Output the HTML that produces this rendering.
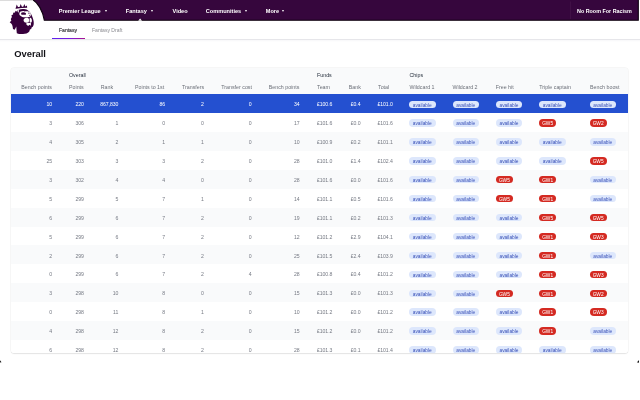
<!DOCTYPE html>
<html><head><meta charset="utf-8"><title>Overall</title>
<style>
*{box-sizing:border-box;margin:0;padding:0}
html,body{width:640px;height:400px;background:#fff;overflow:hidden}
body{position:relative;font-family:"Liberation Sans",sans-serif;}
.abs{position:absolute;white-space:nowrap}
#shot{will-change:transform;filter:blur(0.3px);position:absolute;left:0;top:0;width:640px;height:400px;background:#fff;overflow:hidden}
#nav{position:absolute;left:0;top:0;width:640px;height:22px;}
.nt{position:absolute;color:#fff;font-weight:bold;font-size:5.6px;line-height:8px;top:7px;white-space:nowrap}
.arr{position:absolute;width:0;height:0;border-left:1.9px solid transparent;border-right:1.9px solid transparent;border-top:2.5px solid #fff;top:9.8px}
.st{position:absolute;font-size:5.05px;line-height:8px;top:26.2px;white-space:nowrap}
#tw{position:absolute;left:11.0px;top:68.0px;width:617.4px;height:285.0px;border-radius:3px;overflow:hidden;background:#fff;box-shadow:0 0 0 0.5px rgba(0,0,0,0.05),0 0.5px 1.2px rgba(0,0,0,0.09)}
.row{position:absolute;left:0;width:100%;}
.h{position:absolute;white-space:nowrap;font-size:5.3px;line-height:8px;color:#6b6f78}
.g{position:absolute;white-space:nowrap;font-size:5.3px;line-height:8px;color:#1f2937}
.v{position:absolute;white-space:nowrap;font-size:5.15px;line-height:8px;color:#767a84;letter-spacing:-0.07px}
.w{color:#fff}
.p{position:absolute;height:7.3px;border-radius:4px;font-size:4.8px;line-height:9.3px;text-align:center;white-space:nowrap}
.pa{width:26.5px;background:#dde7fc;color:#3a52b8}
.pg{width:17.2px;background:#d42a22;color:#fff}
</style></head><body>
<div id="shot">

<svg id="nav" viewBox="0 0 640 22"><path d="M31.6,-1 C38,2.3 42.8,11 44.3,20.2 L638.3,20.2 L638.3,-1 Z" fill="#36063d" stroke="#0c000e" stroke-width="1.1"/><rect x="570.3" y="1.5" width="0.5" height="17.5" fill="#4b1a50"/><path d="M138.2,20.7 L140.1,18.4 L142,20.7 Z" fill="#fff"/></svg>
<span class="nt" style="left:58.75px">Premier League</span>
<span class="arr" style="left:104.6px"></span>
<span class="nt" style="left:125.75px">Fantasy</span>
<span class="arr" style="left:151.1px"></span>
<span class="nt" style="left:172.5px">Video</span>
<span class="nt" style="left:205.75px">Communities</span>
<span class="arr" style="left:244.7px"></span>
<span class="nt" style="left:265.75px">More</span>
<span class="arr" style="left:281.90000000000003px"></span>
<span class="nt" style="left:577px;font-size:5.4px">No Room For Racism</span>
<svg class="abs" style="left:0;top:0" width="48" height="40" viewBox="0 0 48 40">
<g fill="#37003c">
<path d="M15.4,8.4 L16.0,7.2 L16.7,4.6 L18.0,7.0 L19.6,6.9 L20.7,4.1 L21.9,6.8 L23.2,6.7 L24.4,4.1 L25.3,6.6 L26.9,5.4 L27.2,7.8 L21.5,8.0 L16.0,8.8 Z"/>
<path d="M18.9,9.7 C21.5,8.8 25.2,8.9 27.7,10.2 C30,11.6 31.6,14.5 32.6,17.5 C33.6,20.2 34.1,23 33.6,25 L32.8,26.8 L31.6,27.6 L31.2,29 L29.9,29.6 L29.3,31.4 L28.2,32.6 L26.5,33.5 L23,34.1 L19,34.1 L16.8,33.2 L16.5,30 L16.3,26.4 L14.7,29.8 L13.0,28.9 L12.6,26.6 L12.1,24.8 L11.2,23.4 L9.7,22.2 L11.3,20.8 L10.8,19 L11.9,16.9 L11.4,15.2 L13.1,14.5 L13.1,12.8 L15.0,12.6 L15.5,10.7 L17.3,11.8 L17.5,10.3 Z"/>
</g>
<g fill="#fff">
<path d="M17.5,10.5 L19.0,9.9 L18.6,12.9 Z"/>
<path d="M19.3,13.4 C19.5,11.7 21.5,10.9 23.5,11.0 L24.6,11.5 C26.2,10.9 28.8,11.1 29.9,12.3 C30.9,13.4 31.2,15.2 30.4,16.3 C29.3,17.5 26.5,17.5 24.3,17.2 C21.7,16.9 19.1,15.5 19.3,13.4 Z"/>
<path d="M23.7,19.6 C24.3,17.9 26.6,17.5 28.1,18.0 C29.3,18.6 29.4,20.5 28.8,21.7 C28.0,22.9 25.8,23.0 24.6,22.3 C23.7,21.6 23.4,20.6 23.7,19.6 Z"/>
<path d="M29.7,17.8 C30.9,17.3 31.8,18.7 31.9,20.2 C32.0,21.6 31.5,22.8 30.6,22.7 C29.7,22.6 29.5,21.4 29.6,20.2 Z"/>
<path d="M25.9,23.8 L27.7,22.8 L30.9,23.1 L30.9,25.7 L29.4,24.7 L28.2,26 L26.9,25.1 Z"/>
</g>
<g fill="#37003c">
<path d="M21.1,13.0 C22,11.9 24.8,12.0 26.0,13.2 L25.6,15.0 C24,14.6 22.8,15.0 21.4,14.7 Z"/>
<circle cx="28.9" cy="13.2" r="0.6"/>
<circle cx="29.5" cy="15.3" r="0.5"/>
</g>
</svg>

<div class="abs" style="left:0;top:0;width:33px;height:0.7px;background:#dcdcdc"></div>
<div class="abs" style="left:0;top:39.3px;width:640px;height:0.7px;background:#e6e6ea"></div>
<div class="abs" style="left:0;top:40px;width:640px;height:2px;background:linear-gradient(#f7f7f9,#fff)"></div>
<span class="st" style="left:59px;color:#2a2a2f;-webkit-text-stroke:0.12px #2a2a2f">Fantasy</span>
<span class="st" style="left:92px;color:#8a8a90">Fantasy Draft</span>
<div class="abs" style="left:52px;top:37.7px;width:32.5px;height:1.6px;background:linear-gradient(90deg,#5e22f0,#7a18dc 55%,#a8128e)"></div>
<div class="abs" style="left:14.2px;top:48.1px;font-size:9.4px;line-height:12px;font-weight:bold;color:#121217">Overall</div>
<div id="tw">
<div class="row" style="top:0;height:26.200000000000003px;background:#f9fafb"></div>
<div class="row" style="top:26.20px;height:18.95px;background:#2450d0"></div>
<div class="row" style="top:45.10px;height:18.95px;background:#fff"></div>
<div class="row" style="top:64.00px;height:18.95px;background:#f9fafb"></div>
<div class="row" style="top:82.90px;height:18.95px;background:#fff"></div>
<div class="row" style="top:101.80px;height:18.95px;background:#f9fafb"></div>
<div class="row" style="top:120.70px;height:18.95px;background:#fff"></div>
<div class="row" style="top:139.60px;height:18.95px;background:#f9fafb"></div>
<div class="row" style="top:158.50px;height:18.95px;background:#fff"></div>
<div class="row" style="top:177.40px;height:18.95px;background:#f9fafb"></div>
<div class="row" style="top:196.30px;height:18.95px;background:#fff"></div>
<div class="row" style="top:215.20px;height:18.95px;background:#f9fafb"></div>
<div class="row" style="top:234.10px;height:18.95px;background:#fff"></div>
<div class="row" style="top:253.00px;height:18.95px;background:#f9fafb"></div>
<div class="row" style="top:271.90px;height:18.95px;background:#fff"></div>
<span class="g" style="left:58.0px;top:2.50px">Overall</span>
<span class="g" style="left:306.0px;top:2.50px">Funds</span>
<span class="g" style="left:398.5px;top:2.50px">Chips</span>
<span class="h" style="left:10.25px;top:15.20px">Bench points</span>
<span class="h" style="left:58.0px;top:15.20px">Points</span>
<span class="h" style="left:89.75px;top:15.20px">Rank</span>
<span class="h" style="left:124.0px;top:15.20px">Points to 1st</span>
<span class="h" style="left:171.0px;top:15.20px">Transfers</span>
<span class="h" style="left:210.25px;top:15.20px">Transfer cost</span>
<span class="h" style="left:257.75px;top:15.20px">Bench points</span>
<span class="h" style="left:306.0px;top:15.20px">Team</span>
<span class="h" style="left:337.75px;top:15.20px">Bank</span>
<span class="h" style="left:367.0px;top:15.20px">Total</span>
<span class="h" style="left:398.5px;top:15.20px">Wildcard 1</span>
<span class="h" style="left:441.5px;top:15.20px">Wildcard 2</span>
<span class="h" style="left:484.75px;top:15.20px">Free hit</span>
<span class="h" style="left:528.25px;top:15.20px">Triple captain</span>
<span class="h" style="left:579.0px;top:15.20px">Bench boost</span>
<span class="v w" style="right:576.40px;top:32.35px">10</span>
<span class="v w" style="right:544.50px;top:32.35px">220</span>
<span class="v w" style="right:510.15px;top:32.35px">867,830</span>
<span class="v w" style="right:463.40px;top:32.35px">86</span>
<span class="v w" style="right:424.65px;top:32.35px">2</span>
<span class="v w" style="right:376.90px;top:32.35px">0</span>
<span class="v w" style="right:328.90px;top:32.35px">34</span>
<span class="v w" style="left:306.00px;top:32.35px">£100.6</span>
<span class="v w" style="right:267.90px;top:32.35px">£0.4</span>
<span class="v w" style="left:366.50px;top:32.35px">£101.0</span>
<span class="p pa" style="left:398.00px;top:32.55px">available</span>
<span class="p pa" style="left:441.50px;top:32.55px">available</span>
<span class="p pa" style="left:484.75px;top:32.55px">available</span>
<span class="p pa" style="left:528.00px;top:32.55px">available</span>
<span class="p pa" style="left:578.50px;top:32.55px">available</span>
<span class="v" style="right:576.40px;top:51.25px">3</span>
<span class="v" style="right:544.50px;top:51.25px">306</span>
<span class="v" style="right:510.15px;top:51.25px">1</span>
<span class="v" style="right:463.40px;top:51.25px">0</span>
<span class="v" style="right:424.65px;top:51.25px">0</span>
<span class="v" style="right:376.90px;top:51.25px">0</span>
<span class="v" style="right:328.90px;top:51.25px">17</span>
<span class="v" style="left:306.00px;top:51.25px">£101.6</span>
<span class="v" style="right:267.90px;top:51.25px">£0.0</span>
<span class="v" style="left:366.50px;top:51.25px">£101.6</span>
<span class="p pa" style="left:398.00px;top:51.45px">available</span>
<span class="p pa" style="left:441.50px;top:51.45px">available</span>
<span class="p pa" style="left:484.75px;top:51.45px">available</span>
<span class="p pg" style="left:528.00px;top:51.45px">GW5</span>
<span class="p pg" style="left:578.50px;top:51.45px">GW2</span>
<span class="v" style="right:576.40px;top:70.15px">4</span>
<span class="v" style="right:544.50px;top:70.15px">305</span>
<span class="v" style="right:510.15px;top:70.15px">2</span>
<span class="v" style="right:463.40px;top:70.15px">1</span>
<span class="v" style="right:424.65px;top:70.15px">1</span>
<span class="v" style="right:376.90px;top:70.15px">0</span>
<span class="v" style="right:328.90px;top:70.15px">10</span>
<span class="v" style="left:306.00px;top:70.15px">£100.9</span>
<span class="v" style="right:267.90px;top:70.15px">£0.2</span>
<span class="v" style="left:366.50px;top:70.15px">£101.1</span>
<span class="p pa" style="left:398.00px;top:70.35px">available</span>
<span class="p pa" style="left:441.50px;top:70.35px">available</span>
<span class="p pa" style="left:484.75px;top:70.35px">available</span>
<span class="p pa" style="left:528.00px;top:70.35px">available</span>
<span class="p pa" style="left:578.50px;top:70.35px">available</span>
<span class="v" style="right:576.40px;top:89.05px">25</span>
<span class="v" style="right:544.50px;top:89.05px">303</span>
<span class="v" style="right:510.15px;top:89.05px">3</span>
<span class="v" style="right:463.40px;top:89.05px">3</span>
<span class="v" style="right:424.65px;top:89.05px">2</span>
<span class="v" style="right:376.90px;top:89.05px">0</span>
<span class="v" style="right:328.90px;top:89.05px">28</span>
<span class="v" style="left:306.00px;top:89.05px">£101.0</span>
<span class="v" style="right:267.90px;top:89.05px">£1.4</span>
<span class="v" style="left:366.50px;top:89.05px">£102.4</span>
<span class="p pa" style="left:398.00px;top:89.25px">available</span>
<span class="p pa" style="left:441.50px;top:89.25px">available</span>
<span class="p pa" style="left:484.75px;top:89.25px">available</span>
<span class="p pa" style="left:528.00px;top:89.25px">available</span>
<span class="p pg" style="left:578.50px;top:89.25px">GW5</span>
<span class="v" style="right:576.40px;top:107.95px">3</span>
<span class="v" style="right:544.50px;top:107.95px">302</span>
<span class="v" style="right:510.15px;top:107.95px">4</span>
<span class="v" style="right:463.40px;top:107.95px">4</span>
<span class="v" style="right:424.65px;top:107.95px">0</span>
<span class="v" style="right:376.90px;top:107.95px">0</span>
<span class="v" style="right:328.90px;top:107.95px">28</span>
<span class="v" style="left:306.00px;top:107.95px">£101.6</span>
<span class="v" style="right:267.90px;top:107.95px">£0.0</span>
<span class="v" style="left:366.50px;top:107.95px">£101.6</span>
<span class="p pa" style="left:398.00px;top:108.15px">available</span>
<span class="p pa" style="left:441.50px;top:108.15px">available</span>
<span class="p pg" style="left:484.75px;top:108.15px">GW5</span>
<span class="p pg" style="left:528.00px;top:108.15px">GW1</span>
<span class="p pa" style="left:578.50px;top:108.15px">available</span>
<span class="v" style="right:576.40px;top:126.85px">5</span>
<span class="v" style="right:544.50px;top:126.85px">299</span>
<span class="v" style="right:510.15px;top:126.85px">5</span>
<span class="v" style="right:463.40px;top:126.85px">7</span>
<span class="v" style="right:424.65px;top:126.85px">1</span>
<span class="v" style="right:376.90px;top:126.85px">0</span>
<span class="v" style="right:328.90px;top:126.85px">14</span>
<span class="v" style="left:306.00px;top:126.85px">£101.1</span>
<span class="v" style="right:267.90px;top:126.85px">£0.5</span>
<span class="v" style="left:366.50px;top:126.85px">£101.6</span>
<span class="p pa" style="left:398.00px;top:127.05px">available</span>
<span class="p pa" style="left:441.50px;top:127.05px">available</span>
<span class="p pg" style="left:484.75px;top:127.05px">GW5</span>
<span class="p pg" style="left:528.00px;top:127.05px">GW1</span>
<span class="p pa" style="left:578.50px;top:127.05px">available</span>
<span class="v" style="right:576.40px;top:145.75px">6</span>
<span class="v" style="right:544.50px;top:145.75px">299</span>
<span class="v" style="right:510.15px;top:145.75px">6</span>
<span class="v" style="right:463.40px;top:145.75px">7</span>
<span class="v" style="right:424.65px;top:145.75px">2</span>
<span class="v" style="right:376.90px;top:145.75px">0</span>
<span class="v" style="right:328.90px;top:145.75px">19</span>
<span class="v" style="left:306.00px;top:145.75px">£101.1</span>
<span class="v" style="right:267.90px;top:145.75px">£0.2</span>
<span class="v" style="left:366.50px;top:145.75px">£101.3</span>
<span class="p pa" style="left:398.00px;top:145.95px">available</span>
<span class="p pa" style="left:441.50px;top:145.95px">available</span>
<span class="p pa" style="left:484.75px;top:145.95px">available</span>
<span class="p pg" style="left:528.00px;top:145.95px">GW5</span>
<span class="p pg" style="left:578.50px;top:145.95px">GW5</span>
<span class="v" style="right:576.40px;top:164.65px">5</span>
<span class="v" style="right:544.50px;top:164.65px">299</span>
<span class="v" style="right:510.15px;top:164.65px">6</span>
<span class="v" style="right:463.40px;top:164.65px">7</span>
<span class="v" style="right:424.65px;top:164.65px">2</span>
<span class="v" style="right:376.90px;top:164.65px">0</span>
<span class="v" style="right:328.90px;top:164.65px">12</span>
<span class="v" style="left:306.00px;top:164.65px">£101.2</span>
<span class="v" style="right:267.90px;top:164.65px">£2.9</span>
<span class="v" style="left:366.50px;top:164.65px">£104.1</span>
<span class="p pa" style="left:398.00px;top:164.85px">available</span>
<span class="p pa" style="left:441.50px;top:164.85px">available</span>
<span class="p pa" style="left:484.75px;top:164.85px">available</span>
<span class="p pg" style="left:528.00px;top:164.85px">GW1</span>
<span class="p pg" style="left:578.50px;top:164.85px">GW3</span>
<span class="v" style="right:576.40px;top:183.55px">2</span>
<span class="v" style="right:544.50px;top:183.55px">299</span>
<span class="v" style="right:510.15px;top:183.55px">6</span>
<span class="v" style="right:463.40px;top:183.55px">7</span>
<span class="v" style="right:424.65px;top:183.55px">2</span>
<span class="v" style="right:376.90px;top:183.55px">0</span>
<span class="v" style="right:328.90px;top:183.55px">25</span>
<span class="v" style="left:306.00px;top:183.55px">£101.5</span>
<span class="v" style="right:267.90px;top:183.55px">£2.4</span>
<span class="v" style="left:366.50px;top:183.55px">£103.9</span>
<span class="p pa" style="left:398.00px;top:183.75px">available</span>
<span class="p pa" style="left:441.50px;top:183.75px">available</span>
<span class="p pa" style="left:484.75px;top:183.75px">available</span>
<span class="p pg" style="left:528.00px;top:183.75px">GW1</span>
<span class="p pa" style="left:578.50px;top:183.75px">available</span>
<span class="v" style="right:576.40px;top:202.45px">0</span>
<span class="v" style="right:544.50px;top:202.45px">299</span>
<span class="v" style="right:510.15px;top:202.45px">6</span>
<span class="v" style="right:463.40px;top:202.45px">7</span>
<span class="v" style="right:424.65px;top:202.45px">2</span>
<span class="v" style="right:376.90px;top:202.45px">4</span>
<span class="v" style="right:328.90px;top:202.45px">28</span>
<span class="v" style="left:306.00px;top:202.45px">£100.8</span>
<span class="v" style="right:267.90px;top:202.45px">£0.4</span>
<span class="v" style="left:366.50px;top:202.45px">£101.2</span>
<span class="p pa" style="left:398.00px;top:202.65px">available</span>
<span class="p pa" style="left:441.50px;top:202.65px">available</span>
<span class="p pa" style="left:484.75px;top:202.65px">available</span>
<span class="p pg" style="left:528.00px;top:202.65px">GW1</span>
<span class="p pg" style="left:578.50px;top:202.65px">GW3</span>
<span class="v" style="right:576.40px;top:221.35px">3</span>
<span class="v" style="right:544.50px;top:221.35px">298</span>
<span class="v" style="right:510.15px;top:221.35px">10</span>
<span class="v" style="right:463.40px;top:221.35px">8</span>
<span class="v" style="right:424.65px;top:221.35px">0</span>
<span class="v" style="right:376.90px;top:221.35px">0</span>
<span class="v" style="right:328.90px;top:221.35px">15</span>
<span class="v" style="left:306.00px;top:221.35px">£101.3</span>
<span class="v" style="right:267.90px;top:221.35px">£0.0</span>
<span class="v" style="left:366.50px;top:221.35px">£101.3</span>
<span class="p pa" style="left:398.00px;top:221.55px">available</span>
<span class="p pa" style="left:441.50px;top:221.55px">available</span>
<span class="p pg" style="left:484.75px;top:221.55px">GW5</span>
<span class="p pg" style="left:528.00px;top:221.55px">GW1</span>
<span class="p pg" style="left:578.50px;top:221.55px">GW2</span>
<span class="v" style="right:576.40px;top:240.25px">0</span>
<span class="v" style="right:544.50px;top:240.25px">298</span>
<span class="v" style="right:510.15px;top:240.25px">11</span>
<span class="v" style="right:463.40px;top:240.25px">8</span>
<span class="v" style="right:424.65px;top:240.25px">1</span>
<span class="v" style="right:376.90px;top:240.25px">0</span>
<span class="v" style="right:328.90px;top:240.25px">10</span>
<span class="v" style="left:306.00px;top:240.25px">£101.2</span>
<span class="v" style="right:267.90px;top:240.25px">£0.0</span>
<span class="v" style="left:366.50px;top:240.25px">£101.2</span>
<span class="p pa" style="left:398.00px;top:240.45px">available</span>
<span class="p pa" style="left:441.50px;top:240.45px">available</span>
<span class="p pa" style="left:484.75px;top:240.45px">available</span>
<span class="p pg" style="left:528.00px;top:240.45px">GW1</span>
<span class="p pg" style="left:578.50px;top:240.45px">GW3</span>
<span class="v" style="right:576.40px;top:259.15px">4</span>
<span class="v" style="right:544.50px;top:259.15px">298</span>
<span class="v" style="right:510.15px;top:259.15px">12</span>
<span class="v" style="right:463.40px;top:259.15px">8</span>
<span class="v" style="right:424.65px;top:259.15px">2</span>
<span class="v" style="right:376.90px;top:259.15px">0</span>
<span class="v" style="right:328.90px;top:259.15px">15</span>
<span class="v" style="left:306.00px;top:259.15px">£101.2</span>
<span class="v" style="right:267.90px;top:259.15px">£0.0</span>
<span class="v" style="left:366.50px;top:259.15px">£101.2</span>
<span class="p pa" style="left:398.00px;top:259.35px">available</span>
<span class="p pa" style="left:441.50px;top:259.35px">available</span>
<span class="p pa" style="left:484.75px;top:259.35px">available</span>
<span class="p pg" style="left:528.00px;top:259.35px">GW1</span>
<span class="p pa" style="left:578.50px;top:259.35px">available</span>
<span class="v" style="right:576.40px;top:278.05px">6</span>
<span class="v" style="right:544.50px;top:278.05px">298</span>
<span class="v" style="right:510.15px;top:278.05px">12</span>
<span class="v" style="right:463.40px;top:278.05px">8</span>
<span class="v" style="right:424.65px;top:278.05px">2</span>
<span class="v" style="right:376.90px;top:278.05px">0</span>
<span class="v" style="right:328.90px;top:278.05px">28</span>
<span class="v" style="left:306.00px;top:278.05px">£101.3</span>
<span class="v" style="right:267.90px;top:278.05px">£0.1</span>
<span class="v" style="left:366.50px;top:278.05px">£101.4</span>
<span class="p pa" style="left:398.00px;top:278.25px">available</span>
<span class="p pa" style="left:441.50px;top:278.25px">available</span>
<span class="p pa" style="left:484.75px;top:278.25px">available</span>
<span class="p pa" style="left:528.00px;top:278.25px">available</span>
<span class="p pa" style="left:578.50px;top:278.25px">available</span>
</div>
<svg class="abs" style="left:0;top:356px" width="640" height="8" viewBox="0 356 640 8"><path d="M0,360.2 C0.5,360.9 1.0,361.6 1.5,362.3 L0,362.6 Z" fill="#111"/><path d="M639,360 C638.5,360.9 637.7,361.7 636.8,362.3 L639,362.8 Z" fill="#111"/></svg>
</div>
</body></html>
